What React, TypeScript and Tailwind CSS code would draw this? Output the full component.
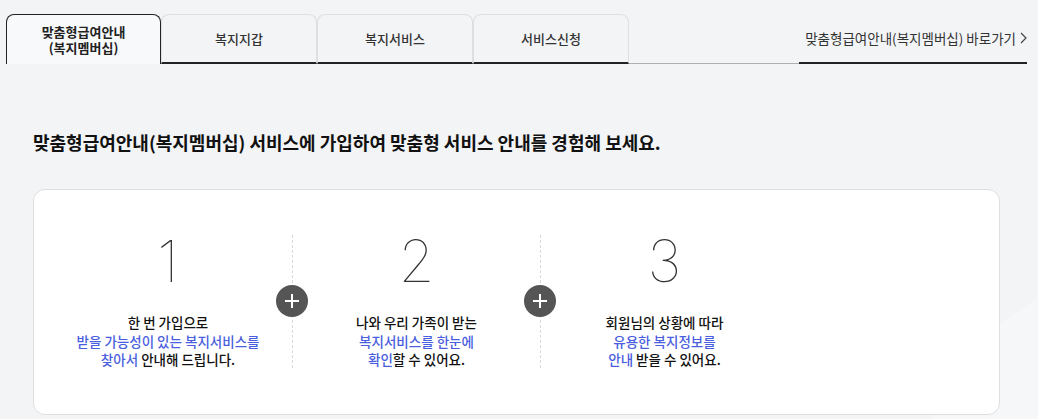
import React from "react";

type Step = {
  num: string;
  lines: React.ReactNode[];
};

const steps: Step[] = [
  {
    num: "1",
    lines: [
      <>한 번 가입으로</>,
      <span className="text-[#4a5ee0]">받을 가능성이 있는 복지서비스를</span>,
      <>
        <span className="text-[#4a5ee0]">찾아서</span> 안내해 드립니다.
      </>,
    ],
  },
  {
    num: "2",
    lines: [
      <>나와 우리 가족이 받는</>,
      <span className="text-[#4a5ee0]">복지서비스를 한눈에</span>,
      <>
        <span className="text-[#4a5ee0]">확인</span>할 수 있어요.
      </>,
    ],
  },
  {
    num: "3",
    lines: [
      <>회원님의 상황에 따라</>,
      <span className="text-[#4a5ee0]">유용한 복지정보를</span>,
      <>
        <span className="text-[#4a5ee0]">안내</span> 받을 수 있어요.
      </>,
    ],
  },
];

const tabs = ["복지지갑", "복지서비스", "서비스신청"];

function PlusIcon() {
  return (
    <svg width="14" height="14" viewBox="0 0 14 14">
      <path d="M7 0v14M0 7h14" stroke="#fff" strokeWidth="2" />
    </svg>
  );
}

export default function App() {
  return (
    <div className="relative h-[419px] w-[1038px] overflow-hidden bg-[#f2f4f6] font-['Noto_Sans_CJK_KR','Noto_Sans',sans-serif]">
      {/* faint decorative shape */}
      <svg className="pointer-events-none absolute inset-0" width="1038" height="419">
        <polygon points="1038,298 1038,419 930,419 990,330" fill="#f6f7f9" />
      </svg>

      <div className="relative">
        {/* tabs */}
        <div className="flex pl-[6px] pr-[11px] pt-[14px]">
          <div className="flex h-[50px] w-[155px] items-center justify-center rounded-t-lg border border-b-0 border-[#222] bg-[#f8f9fa] text-center text-[13px] font-bold leading-[16px] text-[#222]">
            <p>
              맞춤형급여안내
              <br />
              (복지멤버십)
            </p>
          </div>
          {tabs.map((t) => (
            <div
              key={t}
              className="flex h-[50px] w-[156px] items-center justify-center rounded-t-lg border border-[#dddfe2] border-b-2 border-b-[#222] text-[13px] font-medium text-[#333]"
            >
              {t}
            </div>
          ))}
          <div className="h-[50px] flex-1 border-b border-[#b0b0b0]" />
          <div className="flex h-[50px] w-[228px] items-center justify-end gap-[4px] border-b-2 border-[#222] text-[13.5px] text-[#333]">
            <span>맞춤형급여안내(복지멤버십) 바로가기</span>
            <svg width="7" height="12" viewBox="0 0 7 12">
              <path d="M1 1l5 5-5 5" fill="none" stroke="#444" strokeWidth="1.2" />
            </svg>
          </div>
        </div>

        {/* heading */}
        <h2 className="ml-[33px] mt-[66px] text-[18px] font-bold leading-[24px] text-[#111]">
          맞춤형급여안내(복지멤버십) 서비스에 가입하여 맞춤형 서비스 안내를 경험해 보세요.
        </h2>

        {/* card */}
        <div className="ml-[33px] mt-[35px] h-[226px] w-[967px] rounded-xl border border-[#dedfe1] bg-white pl-[10px] pt-[45px]">
          <div className="flex">
            {steps.map((s, i) => (
              <div
                key={s.num}
                className={`relative flex h-[133px] w-[248px] flex-col items-center ${
                  i > 0 ? "border-l border-dashed border-[#d9d9d9]" : ""
                }`}
              >
                {i > 0 && (
                  <div className="absolute left-[-17px] top-[50px] flex h-[32px] w-[32px] items-center justify-center rounded-full bg-[#555]">
                    <PlusIcon />
                  </div>
                )}
                <div className="-mt-[3px] font-['Inter','Lato',sans-serif] text-[58px] font-thin leading-[58px] text-[#333]">
                  {s.num}
                </div>
                <div className="mt-[23px] text-center text-[13.5px] font-medium leading-[18.5px] text-[#111]">
                  {s.lines.map((l, k) => (
                    <div key={k}>{l}</div>
                  ))}
                </div>
              </div>
            ))}
          </div>
        </div>
      </div>
    </div>
  );
}
